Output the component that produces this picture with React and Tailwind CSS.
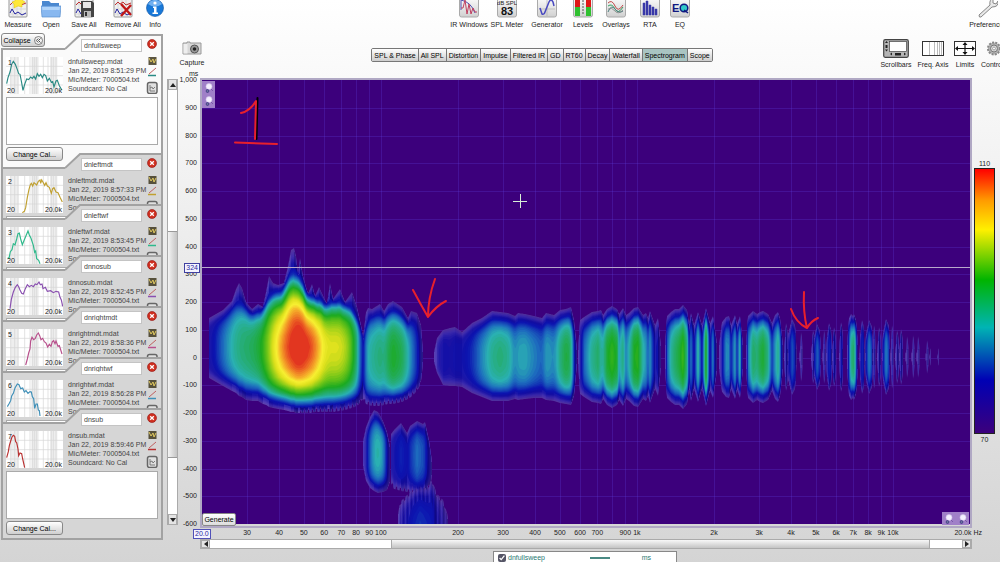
import React from "react";

const measurements = [
  {
    name: "dnfullsweep",
    date: "Jan 22, 2019 8:51:29 PM",
    color: "#2a8a84",
    trace: "2,80 6,62 12,45 17,22 22,13 28,22 34,38 38,50 42,52 46,72 51,100 56,82 62,66 68,68 74,60 79,64 84,58 89,66 94,50 99,58 104,52 109,62 114,52 119,56 124,72 130,64 136,76 140,74 144,90 150,72 154,70 160,86 168,100",
  },
  {
    name: "dnleftmdt",
    date: "Jan 22, 2019 8:57:33 PM",
    color: "#c0a030",
    trace: "49,110 55,106 59,95 64,64 69,40 73,26 76,22 80,30 84,20 92,27 97,16 102,12 104,22 107,12 112,20 116,28 120,20 124,30 130,34 136,52 140,38 144,35 150,48 156,50 162,64 169,78",
  },
  {
    name: "dnleftwf",
    date: "Jan 22, 2019 8:53:45 PM",
    color: "#2fb98c",
    trace: "5,92 9,94 13,74 18,68 22,50 27,54 32,36 36,20 40,18 44,36 49,53 55,38 60,26 66,12 70,24 75,34 82,55 86,76 89,72 92,95 98,100 102,110",
  },
  {
    name: "dnnosub",
    date: "Jan 22, 2019 8:52:45 PM",
    color: "#8a50b0",
    trace: "12,92 16,64 22,42 28,28 34,20 38,26 42,36 47,46 52,48 58,32 64,20 70,26 76,22 82,26 88,18 93,20 99,12 103,20 108,18 111,32 118,28 124,40 134,38 142,44 150,40 158,42 162,58 166,66 170,85",
  },
  {
    name: "dnrightmdt",
    date: "Jan 22, 2019 8:58:36 PM",
    color: "#b8508c",
    trace: "59,108 64,90 68,72 72,60 74,36 78,25 83,32 88,28 92,18 97,12 101,20 105,32 110,28 115,38 120,42 125,54 130,46 135,52 139,38 143,35 147,44 150,36 156,52 160,50 168,75",
  },
  {
    name: "dnrightwf",
    date: "Jan 22, 2019 8:56:28 PM",
    color: "#4090b8",
    trace: "4,80 10,70 14,62 17,48 22,40 27,24 34,12 39,14 44,26 50,24 55,36 60,32 66,40 72,35 76,36 79,50 83,56 86,85 90,72 94,72 97,90 100,92 102,108",
  },
  {
    name: "dnsub",
    date: "Jan 22, 2019 8:59:46 PM",
    color: "#b83030",
    trace: "2,80 7,62 10,44 14,30 18,18 22,13 26,16 29,32 32,35 36,54 38,74 42,66 47,68 50,84 56,110",
  },
];

const tabs = [
  "SPL & Phase",
  "All SPL",
  "Distortion",
  "Impulse",
  "Filtered IR",
  "GD",
  "RT60",
  "Decay",
  "Waterfall",
  "Spectrogram",
  "Scope",
];

const timeTicks = [
  "1,000", "900", "800", "700", "600", "500", "400", "300", "200",
  "100", "0", "-100", "-200", "-300", "-400", "-500", "-600",
];

const freqTicks = [
  [30, "30"], [40, "40"], [50, "50"], [60, "60"], [70, "70"], [80, "80"],
  [90, "90"], [100, "100"], [200, "200"], [300, "300"], [400, "400"],
  [500, "500"], [600, "600"], [700, "700"], [900, "900"], [1000, "1k"],
  [2000, "2k"], [3000, "3k"], [4000, "4k"], [5000, "5k"], [6000, "6k"],
  [7000, "7k"], [8000, "8k"], [9000, "9k"], [10000, "10k"],
];

const gridFreqs = [...freqTicks.map((t) => t[0]), 800];

const freqRatio = (f) => Math.log10(f / 20) / 3;

/* ---------- spectrogram ---------- */

const MID = 357;

// Each island is a list of [x, top, bottom, peak level]
const mirror = (rows) => rows.map(([x, top, peak]) => [x, top, 2 * MID - top, peak]);

const spike = (x, top, peak, w = 4) =>
  mirror([
    [x - w / 2, MID - 4, 0.02],
    [x - w / 2 + 1, top + 14, peak * 0.6],
    [x, top, peak],
    [x + w / 3, top + 6, peak * 0.8],
    [x + w / 2, MID - 8, 0.02],
  ]);

const islands = [
  {
    mid: 347,
    smooth: 10,
    peakSmooth: 5,
    ribFrom: 300,
    rows: [
      [209, 318, 378, 0.15], [216, 314, 382, 0.24], [223, 310, 386, 0.33], [232, 301, 391, 0.42],
      [236, 289, 393, 0.45], [239, 283, 396, 0.47], [242, 288, 397, 0.48], [246, 302, 400, 0.49],
      [252, 309, 401, 0.51], [258, 304, 401, 0.54], [263, 307, 404, 0.6], [266, 292, 405, 0.65],
      [269, 276, 407, 0.71], [273, 283, 408, 0.78], [278, 285, 409, 0.86], [284, 283, 410, 0.94],
      [288, 266, 411, 0.98], [291, 250, 412, 1.01], [294, 248, 412, 1.03], [296, 256, 413, 1.05],
      [298, 274, 413, 1.06], [300, 258, 413, 1.06], [303, 276, 413, 1.04], [308, 294, 413, 1],
      [312, 284, 413, 0.97], [315, 296, 412, 0.94], [319, 287, 412, 0.88], [325, 300, 412, 0.8],
      [327, 304, 412, 0.77], [330, 283, 412, 0.77], [333, 299, 412, 0.78], [340, 289, 411, 0.77],
      [345, 302, 410, 0.74], [352, 292, 408, 0.64], [357, 307, 406, 0.5], [361, 325, 402, 0.3],
      [363, 338, 399, 0.12],
    ],
  },
  {
    mid: MID,
    smooth: 5,
    peakSmooth: 2,
    ribFrom: 364,
    rows: [
      [363, 338, 399, 0.2], [366, 312, 404, 0.36], [368, 308, 405, 0.41], [372, 309, 406, 0.44],
      [380, 304, 406, 0.48], [384, 311, 405, 0.46], [388, 304, 404, 0.52], [393, 301, 404, 0.57],
      [402, 307, 402, 0.52], [408, 318, 399, 0.42], [411, 311, 397, 0.36], [417, 313, 391, 0.25],
      [421, 325, 384, 0.12], [423, 352, 362, 0.03],
    ],
  },
  {
    mid: MID,
    smooth: 3,
    peakSmooth: 2,
    rows: [
      [434, 352, 362, 0.02], [437, 338, 373, 0.12], [443, 330, 385, 0.17], [450, 328, 386, 0.15],
      [455, 327, 386, 0.18], [462, 332, 387, 0.18], [472, 323, 393, 0.25], [482, 318, 397, 0.36],
      [492, 311, 401, 0.45], [500, 312, 401, 0.48], [508, 313, 401, 0.45], [515, 316, 399, 0.36],
      [518, 313, 400, 0.39], [525, 314, 399, 0.4], [534, 316, 398, 0.35], [542, 318, 398, 0.31],
      [546, 313, 400, 0.39], [554, 315, 401, 0.36], [560, 310, 403, 0.47], [566, 309, 404, 0.55],
      [571, 307, 405, 0.5], [574, 320, 396, 0.26], [577, 350, 364, 0.03],
    ],
  },
  {
    mid: MID,
    rows: mirror([
      [578, 350, 0.03], [580, 320, 0.15], [584, 317, 0.32], [592, 312, 0.45], [598, 311, 0.5],
      [601, 310, 0.44], [603, 315, 0.44], [607, 309, 0.56], [612, 306, 0.61], [617, 309, 0.56],
      [619, 314, 0.4], [623, 308, 0.47], [626, 315, 0.36], [629, 313, 0.42], [634, 308, 0.58],
      [638, 307, 0.6], [643, 315, 0.43], [646, 313, 0.38], [648, 318, 0.32], [650, 311, 0.38],
      [655, 325, 0.18], [658, 318, 0.2], [661, 346, 0.03],
    ]),
  },
  {
    mid: MID,
    rows: mirror([
      [665, 345, 0.03], [667, 316, 0.3], [671, 312, 0.44], [675, 309, 0.5], [679, 309, 0.55],
      [683, 305, 0.62], [687, 310, 0.48], [689, 324, 0.25], [691, 313, 0.34], [694, 325, 0.2],
      [698, 312, 0.45], [702, 325, 0.22], [706, 308, 0.6], [710, 323, 0.2], [713, 316, 0.36],
      [717, 343, 0.03],
    ]),
  },
  {
    mid: MID,
    rows: mirror([
      [719, 345, 0.03], [722, 322, 0.2], [726, 317, 0.37], [729, 316, 0.36], [731, 325, 0.24],
      [735, 315, 0.4], [737, 324, 0.26], [740, 316, 0.44], [743, 345, 0.03],
    ]),
  },
  {
    mid: MID,
    rows: mirror([
      [746, 345, 0.03], [748, 316, 0.34], [753, 311, 0.5], [757, 314, 0.48], [760, 312, 0.53],
      [763, 311, 0.56], [768, 314, 0.47], [772, 323, 0.28], [775, 315, 0.38], [778, 312, 0.46],
      [780, 318, 0.38], [783, 345, 0.03],
    ]),
  },
  { mid: MID, rows: spike(786, 323, 0.16) },
  { mid: MID, rows: spike(792, 319, 0.3, 9) },
  { mid: MID, rows: spike(801, 332, 0.08, 3) },
  { mid: MID, rows: spike(813, 330, 0.14) },
  { mid: MID, rows: spike(817, 324, 0.32, 8) },
  { mid: MID, rows: spike(824, 330, 0.12, 3) },
  { mid: MID, rows: spike(829, 323, 0.25, 6) },
  { mid: MID, rows: spike(834, 327, 0.2) },
  { mid: MID, rows: spike(841, 322, 0.22) },
  {
    mid: MID,
    rows: mirror([
      [847, 345, 0.03], [849, 318, 0.3], [851, 314, 0.46], [853, 316, 0.5], [854, 314, 0.5],
      [856, 320, 0.36], [858, 345, 0.03],
    ]),
  },
  { mid: MID, rows: spike(862, 320, 0.26, 5) },
  { mid: MID, rows: spike(869, 320, 0.36, 8) },
  { mid: MID, rows: spike(874, 325, 0.15, 3) },
  { mid: MID, rows: spike(879, 327, 0.16, 4) },
  { mid: MID, rows: spike(886, 319, 0.36, 8) },
  { mid: MID, rows: spike(892, 325, 0.13, 3) },
  { mid: MID, rows: spike(897, 330, 0.13, 4) },
  { mid: MID, rows: spike(901, 329, 0.15, 4) },
  { mid: MID, rows: spike(907, 336, 0.08, 3) },
  { mid: MID, rows: spike(913, 335, 0.08, 3) },
  { mid: MID, rows: spike(918, 336, 0.08, 3) },
  { mid: MID, rows: spike(927, 340, 0.07, 3) },
  { mid: MID, rows: spike(930, 344, 0.06, 2) },
  { mid: MID, rows: spike(938, 344, 0.06, 2) },
  {
    mid: 540,
    ribTop: true,
    rows: [
      [398, 514, 570, 0.05], [400, 502, 570, 0.12], [407, 495, 570, 0.18], [413, 488, 570, 0.23],
      [420, 484, 570, 0.26], [427, 486, 570, 0.24], [432, 480, 570, 0.22], [437, 494, 570, 0.14],
      [443, 500, 570, 0.1], [448, 516, 570, 0.04],
    ],
  },
  {
    mid: 455,
    smooth: 2,
    ribFrom: 391,
    rows: [
      [391, 434, 484, 0.14], [394, 430, 489, 0.18], [401, 423, 491, 0.24], [407, 433, 492, 0.2],
      [410, 426, 493, 0.25], [417, 421, 494, 0.33], [423, 424, 493, 0.29], [425, 422, 491, 0.26],
      [429, 440, 488, 0.14], [432, 462, 478, 0.03],
    ],
  },
  {
    mid: 453,
    smooth: 2,
    peakSmooth: 2,
    rows: [
      [363, 441, 466, 0.08], [366, 427, 481, 0.18], [370, 417, 488, 0.32], [374, 410, 491, 0.4],
      [378, 412, 493, 0.43], [383, 421, 492, 0.38], [387, 432, 490, 0.22], [390, 447, 482, 0.05],
    ],
  },
];

const fade = [
  [0, 1], [0.15, 0.94], [0.38, 0.83], [0.57, 0.74], [0.75, 0.61], [0.85, 0.5], [0.93, 0.35], [0.98, 0.18], [1, 0],
];

const palette = [
  [0, [80, 48, 156]],
  [0.07, [58, 40, 172]],
  [0.14, [20, 14, 164]],
  [0.21, [12, 20, 176]],
  [0.32, [30, 110, 190]],
  [0.4, [42, 176, 178]],
  [0.49, [36, 172, 100]],
  [0.57, [28, 170, 32]],
  [0.66, [110, 196, 24]],
  [0.76, [220, 224, 28]],
  [0.82, [248, 240, 50]],
  [0.89, [244, 160, 40]],
  [0.96, [232, 80, 34]],
  [1, [222, 36, 30]],
];

function lerpTable(table, v) {
  for (let i = 1; i < table.length; i++) {
    if (v <= table[i][0]) {
      const [a, va] = table[i - 1];
      const [b, vb] = table[i];
      const k = (v - a) / (b - a);
      return Array.isArray(va) ? va.map((c, j) => Math.round(c + (vb[j] - c) * k)) : va + (vb - va) * k;
    }
  }
  return table[table.length - 1][1];
}

const STEP = 0.5;

function average(values, radius) {
  const r = Math.round(radius / STEP);
  return values.map((_, i) => {
    let sum = 0;
    for (let j = i - r; j <= i + r; j++) {
      sum += values[Math.min(values.length - 1, Math.max(0, j))];
    }
    return sum / (2 * r + 1);
  });
}

// Resample the control rows into thin columns and add a smoothed envelope
function toColumns({ rows, mid, smooth = 0, peakSmooth = 0, ribFrom = Infinity, ribTop }) {
  const first = rows[0][0];
  const last = rows[rows.length - 1][0];
  const xs = [];
  for (let x = first; x <= last; x += STEP) xs.push(x);

  const sample = (col) => {
    const table = rows.map((r) => [r[0], r[col]]);
    return xs.map((x) => lerpTable(table, x));
  };
  const top = sample(1);
  const bottom = sample(2);
  const peak = average(sample(3), peakSmooth);
  const wide = average(top, smooth);
  const soft = average(top.map((t, i) => Math.max(t, wide[i])), smooth / 3);

  return xs.map((x, i) => {
    const rib = x % 4 < 1.5 ? 3 : 0;
    return {
      x,
      mid,
      top: top[i] + (ribTop ? rib : 0),
      soft: soft[i],
      bottom: bottom[i],
      rib: x > ribFrom ? rib : 0,
      peak: peak[i],
    };
  });
}

function span(c, level) {
  const k = Math.pow(lerpTable(fade, Math.min(1, level / c.peak)), 0.6 + 0.5 * c.peak);
  const w = Math.min(1, level / 0.25);
  const edge = c.top + (c.soft - c.top) * w;
  const base = c.bottom - c.rib * (1 - w);
  return [c.mid - (c.mid - edge) * k, c.mid + (base - c.mid) * k];
}

function contour(cols, level) {
  let d = "";
  let run = [];
  const flush = () => {
    if (run.length > 1) {
      const up = run.map((p) => `${p[0]},${p[1].toFixed(1)}`);
      const down = run.map((p) => `${p[0]},${p[2].toFixed(1)}`).reverse();
      d += `M${up.join("L")}L${down.join("L")}Z`;
    }
    run = [];
  };
  cols.forEach((c) => {
    if (c.peak > level) run.push([c.x, ...span(c, level)]);
    else flush();
  });
  flush();
  return d;
}

const columns = islands.map(toColumns);
const LEVELS = 60;
const SHADED = 11;
const layers = Array.from({ length: LEVELS }, (_, i) => {
  const level = i / LEVELS;
  const [r, g, b] = lerpTable(palette, level);
  return { d: columns.map((c) => contour(c, level)).join(""), fill: `rgb(${r},${g},${b})` };
});

// Light falls from the left: rising flanks are brighter, falling ones darker
const shades = columns
  .flatMap((cols) =>
    cols.slice(0, -2).filter((_, i) => i % 2 === 0).map((c, i) => {
      const next = cols[i * 2 + 2];
      const slope = c.top - next.top + (next.peak - c.peak) * 40;
      const alpha = slope > 0 ? Math.min(0.24, slope * 0.05) : Math.min(0.4, -slope * 0.07);
      return {
        x: c.x,
        y: Math.max(c.top, next.top),
        h: Math.min(c.bottom - c.rib, next.bottom - next.rib) - Math.max(c.top, next.top),
        fill: slope > 0 ? `rgba(150,130,220,${alpha.toFixed(2)})` : `rgba(10,0,90,${alpha.toFixed(2)})`,
      };
    })
  )
  .filter((s) => s.h > 0);

function Spectrogram() {
  return (
    <svg className="block w-full h-[444px] bg-[#3c007c]" viewBox="202 80 768 444" preserveAspectRatio="none">
      <g stroke="#6040e0" strokeOpacity="0.26">
        {gridFreqs.map((f) => (
          <path key={f} d={`M${202.5 + Math.round(freqRatio(f) * 768)} 80v444`} />
        ))}
        {timeTicks.slice(1, -1).map((t, i) => (
          <path key={t} d={`M202 ${Math.round(80 + (i + 1) * 27.75) + 0.5}h768`} />
        ))}
      </g>

      {layers.slice(0, SHADED).map((l, i) => (
        <path key={i} d={l.d} fill={l.fill} />
      ))}
      {shades.map((s, i) => (
        <rect key={i} x={s.x} y={s.y} width="1" height={s.h} fill={s.fill} />
      ))}
      {layers.slice(SHADED).map((l, i) => (
        <path key={i} d={l.d} fill={l.fill} />
      ))}

      <path d="M202 267.5h768" stroke="#b8a8cc" />
      <path d="M513 201.5h14M520.5 194v14" stroke="#d8f0d8" />

      <g fill="none" strokeLinecap="round" strokeLinejoin="round">
        <path d="M257.500 98L256.500 139" stroke="#000" strokeWidth="2" />
        <g stroke="#e8202c" strokeWidth="2">
          <path d="M241 113Q250 111 256 101L255 139M235 142.500L277 144" />
          <path d="M413 290Q421 305 428 317Q428 298 435 279M428 317Q436 306 446 301" />
          <path d="M804 292Q803 312 807 328M791 309Q796 323 807 328Q811 321 818 318" />
        </g>
      </g>
    </svg>
  );
}

/* ---------- icons ---------- */

function SheetIcon({ children }) {
  return (
    <svg className="w-5 h-[18px]" viewBox="0 0 20 18">
      <rect x="1" y="-4" width="18" height="21" rx="1" fill="#f0f0f0" stroke="#999" />
      <path d="M5-2v19M9-2v19M13-2v19M1 4h18M1 9h18M1 14h18" stroke="#ccc" strokeWidth=".6" />
      <path d="M2 5l3-3 2 2 3-2 3 3 5-2" fill="none" stroke="#c03030" />
      <path d="M2 13l2-4 3 5 3-2 4 3 4-2" fill="none" stroke="#2020a0" />
      {children}
    </svg>
  );
}

function TileIcon({ children }) {
  return (
    <svg className="w-5 h-[18px]" viewBox="0 0 20 18">
      <defs>
        <linearGradient id="tile" x2="0" y2="1">
          <stop offset="0" stopColor="#fff" />
          <stop offset="1" stopColor="#d0d0d0" />
        </linearGradient>
      </defs>
      <rect x="0.500" y="-4" width="19" height="21" rx="2" fill="url(#tile)" stroke="#aaa" />
      {children}
    </svg>
  );
}

const leftTools = [
  {
    label: "Measure",
    width: "w-9",
    icon: (
      <SheetIcon>
        <path d="M7-2l3 1 3-2 1 3 3 2-3 2 0 3-4-1-4 2V4L4 2l3-1z" fill="#ffe838" stroke="#e0c000" strokeWidth=".5" />
      </SheetIcon>
    ),
  },
  {
    label: "Open",
    width: "w-[30px]",
    icon: (
      <svg className="w-5 h-[18px]" viewBox="0 0 20 18">
        <path d="M1 1h7l2 2h8v12H1z" fill="#4a88d0" />
        <path d="M0 6h20l-1 11H1z" fill="#88b8f0" stroke="#5a90d0" strokeWidth=".7" />
        <path d="M1 7h18l-.5 3H1.500z" fill="#b0d4fa" />
      </svg>
    ),
  },
  {
    label: "Save All",
    width: "w-9",
    icon: (
      <SheetIcon>
        <path d="M7 1h11l2 2v14H7z" fill="#444" />
        <path d="M9 2h8v6H9z" fill="#e8e8e8" />
        <path d="M10 11h7v6h-7z" fill="#bbb" />
        <path d="M11 12h2v4h-2z" fill="#333" />
      </SheetIcon>
    ),
  },
  {
    label: "Remove All",
    width: "w-[42px]",
    icon: (
      <SheetIcon>
        <path d="M8 4l10 11M18 5L8 16" stroke="#c01818" strokeWidth="2.400" />
      </SheetIcon>
    ),
  },
  {
    label: "Info",
    width: "w-[22px]",
    icon: (
      <svg className="w-5 h-[18px]" viewBox="0 0 20 18">
        <circle cx="10" cy="8" r="8.500" fill="#1878d8" stroke="#0c50a0" strokeWidth=".6" />
        <path d="M3 4a8 8 0 0 1 14 0q-7 5-14 0" fill="#70b0f0" />
        <circle cx="10" cy="3" r="1.600" fill="#fff" />
        <path d="M8 6.500h3.500v6H13V14H7.500v-1.500H9V8H8z" fill="#fff" />
      </svg>
    ),
  },
];

const centerTools = [
  {
    label: "IR Windows",
    width: "w-[34px]",
    icon: (
      <TileIcon>
        <path d="M2 10V0q10 2 14 13" fill="none" stroke="#5050b0" />
        <path d="M2 8h2l2-8 2 14 2-10 2 10 2-6 2 4h2" fill="none" stroke="#c04060" />
      </TileIcon>
    ),
  },
  {
    label: "SPL Meter",
    width: "w-[42px]",
    icon: (
      <TileIcon>
        <text x="10" y="5" fontSize="6" textAnchor="middle" fill="#222">dB SPL</text>
        <text x="10" y="15" fontSize="11" fontWeight="bold" textAnchor="middle" fill="#111">83</text>
      </TileIcon>
    ),
  },
  {
    label: "Generator",
    width: "w-[38px]",
    icon: (
      <TileIcon>
        <path d="M2 9h16M10 0v16" stroke="#aaa" strokeWidth=".6" />
        <path d="M3 8l2 6q2 1 3-2l4-10q2-4 4 0l1 4" fill="none" stroke="#4848c0" strokeWidth="1.500" />
      </TileIcon>
    ),
  },
  {
    label: "Levels",
    width: "w-[34px]",
    icon: (
      <TileIcon>
        <path d="M2 0h5v7H2zM13 0h5v7h-5z" fill="#e01818" />
        <path d="M2 7h5v9H2zM13 7h5v9h-5z" fill="#30c030" />
        <path d="M9 1h2M9 4h2M9 7h2M9 10h2M9 13h2" stroke="#555" />
      </TileIcon>
    ),
  },
  {
    label: "Overlays",
    width: "w-8",
    icon: (
      <TileIcon>
        <path d="M2 3q4-4 7 3t8-1" fill="none" stroke="#c04848" />
        <path d="M2 6q4-3 7 3t8-2" fill="none" stroke="#30a060" />
        <path d="M2 12q3-8 7-3t8 2" fill="none" stroke="#508080" />
        <path d="M2 9q4-2 7 2t8-1" fill="none" stroke="#777" strokeWidth=".7" />
      </TileIcon>
    ),
  },
  {
    label: "RTA",
    width: "w-9",
    icon: (
      <TileIcon>
        <path d="M3 15V3h2v12zM6 15V1h2v14zM9 15V5h2v10zM12 15V7h2v8zM15 15V9h2v6z" fill="#3838a8" stroke="#3838a8" strokeWidth=".5" />
      </TileIcon>
    ),
  },
  {
    label: "EQ",
    width: "w-6",
    icon: (
      <TileIcon>
        <text x="2" y="12" fontSize="11" fontWeight="bold" fill="#101880">E</text>
        <circle cx="14" cy="8" r="3.800" fill="#30c8c8" stroke="#101880" strokeWidth="1.500" />
        <path d="M14 10l4 3" stroke="#101880" strokeWidth="1.500" />
      </TileIcon>
    ),
  },
];

function ToolButton({ label, width, icon }) {
  return (
    <button className={`${width} shrink-0 flex flex-col items-center gap-[2px] whitespace-nowrap`}>
      {icon}
      <span>{label}</span>
    </button>
  );
}

function CloseIcon() {
  return (
    <svg className="w-[10px] h-[10px]" viewBox="0 0 10 10">
      <circle cx="5" cy="5" r="4.500" fill="#d03020" stroke="#901010" strokeWidth=".6" />
      <path d="M3.200 3.200l3.600 3.600M6.800 3.200L3.200 6.800" stroke="#fff" strokeWidth="1.300" />
    </svg>
  );
}

function SearchPair({ vertical }) {
  return (
    <div className={`flex items-center justify-around bg-[#a080c8] ${vertical ? "flex-col w-[13px] h-[27px]" : "w-[27px] h-[13px]"}`}>
      {["+", "-"].map((s) => (
        <button key={s} aria-label={s === "+" ? "Zoom in" : "Zoom out"}>
          <svg className="w-[9px] h-[10px]" viewBox="0 0 9 10">
            <circle cx="5" cy="3.500" r="3" fill="#f4f0ff" stroke="#d0c0e8" strokeWidth=".6" />
            <path d="M7 6l2 2" stroke="#7858a8" />
            <circle cx="3.500" cy="8" r="1.800" fill="#303078" />
            <path d="M2.500 8h2" stroke="#fff" strokeWidth=".6" />
          </svg>
        </button>
      ))}
    </div>
  );
}

/* ---------- sidebar ---------- */

function Thumbnail({ index, color, trace }) {
  return (
    <svg className="w-[57px] h-[37px] shrink-0 bg-white" viewBox="0 0 171 111">
      <path d="M14 0h24v111H14zM76 0h22v111H76zM132 0h22v111h-22z" fill="#eee" />
      <path
        d="M14 0v111M26 0v111M36 0v111M56 0v111M72 0v111M80 0v111M86 0v111M92 0v111M112 0v111M126 0v111M136 0v111M142 0v111M150 0v111M0 28h171M0 56h171M0 84h171"
        stroke="#d4d4d4"
        strokeWidth="2"
      />
      <polyline points={trace} fill="none" stroke={color} strokeWidth="3.500" />
      <g fontSize="21" fill="#222">
        <text x="6" y="23">{index}</text>
        <text x="3" y="108">20</text>
        <text x="168" y="108" textAnchor="end">20.0k</text>
      </g>
    </svg>
  );
}

function MeasurementCard({ item, index }) {
  const active = index === 1;
  const bg = active ? "bg-[#fafafa]" : "bg-[#d6d6d6]";
  const size = active ? "h-[135px] -mb-4" : index === 7 ? "h-[132px]" : "h-[132px] -mb-[81px]";

  return (
    <li className={`relative flex flex-col ${size}`}>
      <div className="relative z-10 flex h-4">
        <div className="w-16 h-4 border-b-2 border-[#a2a2a2]" />
        <svg className="w-4 h-4" viewBox="0 0 16 16">
          <path d="M0 15L15 1h1v15H0z" fill={active ? "#fafafa" : "#d6d6d6"} />
          <path d="M0 15L15 1h1" fill="none" stroke="#a2a2a2" strokeWidth="2" />
        </svg>
        <div className={`flex-1 flex items-start gap-[5px] pt-[3px] border-t-2 border-r-2 border-[#a2a2a2] ${bg}`}>
          <input
            aria-label={`Name of measurement ${index}`}
            defaultValue={item.name}
            className="w-[61px] h-[13px] px-[2px] bg-white border border-[#c4c4c4] text-[#444]"
          />
          <button aria-label="Remove measurement">
            <CloseIcon />
          </button>
        </div>
      </div>

      <div className={`flex-1 flex flex-col items-start px-[3px] pt-[7px] border-x-2 border-b-2 border-[#a2a2a2] ${bg}`}>
        <div className="w-full h-10 flex">
          <Thumbnail index={index} color={item.color} trace={item.trace} />
          <div className="flex-1 min-w-0 pl-[5px] leading-[9px] text-[#444] whitespace-nowrap">
            <p>{item.name}.mdat</p>
            <p>{item.date}</p>
            <p>Mic/Meter: 7000504.txt</p>
            <p>Soundcard: No Cal</p>
          </div>
          <svg className="w-3 h-[37px] shrink-0" viewBox="0 0 12 37">
            <path d="M2.500 0v8h8V0z" fill="#403820" opacity=".85" />
            <path d="M3 1l2 4 2-3 1 4 2-4" fill="none" stroke="#e0c860" />
            <path d="M3 17l7-6" stroke="#c06060" />
            <path d="M2 18.500h8" stroke={item.color} strokeWidth="1.500" />
            <rect x="1.500" y="25.500" width="9.500" height="11" rx="2" fill="#e0e0e0" stroke="#666" strokeWidth="1.500" />
            <path d="M4 28v6h5M4 31l2-1 1 2 2-2" fill="none" stroke="#666" strokeWidth=".8" />
          </svg>
        </div>
        <textarea
          aria-label={`Notes for ${item.name}`}
          className="block shrink-0 w-full h-12 bg-white border border-[#aaa] resize-none"
        />
        <button className="shrink-0 w-[57px] h-[14px] mt-[2px] leading-[11px] border border-[#888] rounded-[3px] bg-linear-to-b from-white to-[#cfcfcf] text-black">
          Change Cal...
        </button>
      </div>
    </li>
  );
}

function ScrollArrow({ d, label, size }) {
  return (
    <button aria-label={label} className={`${size} shrink-0 flex items-center justify-center bg-[#e4e4e4] border border-[#aaa]`}>
      <svg className="w-[6px] h-[6px]" viewBox="0 0 6 6">
        <path d={d} fill="#222" />
      </svg>
    </button>
  );
}

function Sidebar() {
  return (
    <aside className="w-[180px] shrink-0 flex gap-[4px] pl-[1px]">
      <div className="w-[162px] shrink-0 pt-[1px]">
        <button className="relative z-20 w-[44px] h-[14px] flex items-center justify-center gap-[3px] border border-[#888] rounded-[3px] bg-linear-to-b from-white to-[#cfcfcf] text-black">
          Collapse
          <svg className="w-[9px] h-[9px]" viewBox="0 0 9 9">
            <circle cx="4.500" cy="4.500" r="4" fill="#f4f4f4" stroke="#555" strokeWidth=".7" />
            <path d="M4.300 2.500l-2 2 2 2M6.500 2.500l-2 2 2 2" fill="none" stroke="#222" strokeWidth=".8" />
          </svg>
        </button>
        <ul className="-mt-[13px]">
          {measurements.map((m, i) => (
            <MeasurementCard key={m.name} item={m} index={i + 1} />
          ))}
        </ul>
      </div>
      <div className="w-[11px] h-[446px] mt-[47px] flex flex-col bg-white border-x border-[#aaa]">
        <ScrollArrow d="M0 5h6L3 1z" label="Scroll up" size="w-full h-[11px]" />
        <div className="h-[141px]" />
        <div className="h-[227px] border-y border-[#999] bg-linear-to-r from-[#f4f4f4] to-[#c4c4c4]" />
        <div className="flex-1" />
        <ScrollArrow d="M0 1h6L3 5z" label="Scroll down" size="w-full h-[11px]" />
      </div>
    </aside>
  );
}

/* ---------- graph area ---------- */

const graphTools = [
  {
    label: "Scrollbars",
    width: "w-8",
    icon: (
      <svg className="w-[26px] h-[19px]" viewBox="0 0 26 19">
        <rect x=".7" y=".7" width="24.600" height="17.600" rx="1.500" fill="#b4b4b4" stroke="#444" strokeWidth="1.200" />
        <rect x="6.500" y="2.500" width="17" height="10" fill="#fff" stroke="#444" strokeWidth=".7" />
        <path d="M3.500 2l1.500 2H2zM3.500 12.500L2 10.500h3zM2.500 6h2v3h-2zM7 15l2-1.500v3zM23 15l-2-1.500v3zM12 14h6v2.500h-6z" fill="#222" />
      </svg>
    ),
  },
  {
    label: "Freq. Axis",
    width: "w-[34px]",
    icon: (
      <svg className="w-[22px] h-[19px]" viewBox="0 0 22 19">
        <rect x=".5" y="2.500" width="21" height="14" fill="#fff" stroke="#333" />
        <path d="M7.500 3v13M12.500 3v13M15.500 3v13M17.500 3v13M19.500 3v13" stroke="#aaa" strokeWidth=".8" />
      </svg>
    ),
  },
  {
    label: "Limits",
    width: "w-[22px]",
    icon: (
      <svg className="w-[22px] h-[19px]" viewBox="0 0 22 19">
        <rect x=".5" y="2.500" width="21" height="14" fill="#fff" stroke="#333" />
        <path d="M2 9.500h18M11 4v11" stroke="#111" strokeWidth="1.200" />
        <path d="M1 9.500L4 7v5zM21 9.500L18 7v5zM11 3L8.500 6h5zM11 16l-2.500-3h5z" fill="#111" />
      </svg>
    ),
  },
  {
    label: "Controls",
    width: "w-7",
    icon: (
      <svg className="w-[16px] h-[19px]" viewBox="0 0 16 19">
        <circle cx="8" cy="9.500" r="6" fill="#b4b4b4" stroke="#888" strokeWidth="2" strokeDasharray="2 1.200" />
        <circle cx="8" cy="9.500" r="3.500" fill="#d8d8d8" stroke="#777" />
        <circle cx="8" cy="9.500" r="1.400" fill="#fff" stroke="#777" strokeWidth=".6" />
      </svg>
    ),
  },
];

function GraphToolbar() {
  return (
    <div className="h-[38px] flex items-start">
      <button className="w-[24px] flex flex-col items-center gap-[2px] pt-[9px]">
        <svg className="w-[20px] h-[15px]" viewBox="0 0 20 15">
          <path d="M2 2h3V1h3v1h11v11H1V2z" fill="#d8d8d8" stroke="#999" />
          <rect x="1.500" y="3" width="4" height="9.500" fill="#eee" />
          <circle cx="12.500" cy="8" r="4" fill="#999" stroke="#555" />
          <circle cx="12.500" cy="8" r="1.800" fill="#222" />
        </svg>
        Capture
      </button>
      <div className="flex-1 flex justify-center pt-4">
        <div className="flex h-[14px] border border-[#777] rounded-[2px] overflow-hidden">
          {tabs.map((t) => (
            <button
              key={t}
              className={`px-[2px] border-r border-[#777] last:border-r-0 whitespace-nowrap text-black ${
                t === "Spectrogram" ? "bg-[#a9c4c2]" : "bg-linear-to-b from-white to-[#cdcdcd]"
              }`}
            >
              {t}
            </button>
          ))}
        </div>
      </div>
      <div className="shrink-0 flex gap-[4px] pt-[7px] -mr-2">
        {graphTools.map((t) => (
          <ToolButton key={t.label} {...t} />
        ))}
      </div>
    </div>
  );
}

function Graph() {
  return (
    <>
      <div className="h-2 pl-[9px] leading-[8px]">ms</div>
      <div className="flex">
        <div className="relative w-[20px] shrink-0 flex justify-end pr-[3px]">
          <div className="h-[452px] -mt-[2px] flex flex-col justify-between text-right leading-[8px]">
            {timeTicks.map((t) => (
              <span key={t}>{t}</span>
            ))}
          </div>
          <span className="absolute right-0 top-[185px] px-[1px] leading-[8px] border border-[#4040a0] bg-[#f4f4ff] text-[#2828a0]">
            324
          </span>
        </div>

        <div className="relative flex-1 border-2 border-[#b0a8c4]">
          <Spectrogram />
          <div className="absolute left-0 top-px">
            <SearchPair vertical />
          </div>
          <button className="absolute left-0 bottom-0 w-[34px] h-[13px] border border-[#888] rounded-[2px] bg-linear-to-b from-white to-[#dcdcdc] text-black">
            Generate
          </button>
          <div className="absolute right-px bottom-px">
            <SearchPair />
          </div>
        </div>

        <div className="w-7 shrink-0 flex flex-col items-center pt-[82px] pr-[3px] leading-[8px]">
          110
          <div className="w-[21px] h-[266px] border border-[#222] bg-[linear-gradient(to_bottom,#ff0000,#ff9c00_12%,#fff000_23%,#00b400_42%,#00b4b4_60%,#0000b4_80%,#3c007c)]" />
          <span className="mt-[2px]">70</span>
        </div>
      </div>

      <div className="relative h-[11px] ml-[22px] mr-[30px] leading-[10px]">
        <span className="absolute -left-[9px] top-[1px] px-[1px] leading-[8px] border border-[#5050b8] bg-[#f4f4ff] text-[#2828a0]">
          20.0
        </span>
        {freqTicks.map(([f, label]) => (
          <span key={f} className="absolute -translate-x-1/2" style={{ left: `${freqRatio(f) * 100}%` }}>
            {label}
          </span>
        ))}
        <span className="absolute -right-[12px] whitespace-nowrap">20.0k Hz</span>
      </div>

      <div className="h-[10px] ml-[20px] mr-[28px] flex bg-white border border-[#aaa]">
        <ScrollArrow d="M5 0v6L1 3z" label="Scroll left" size="w-[9px] h-full" />
        <div className="w-[181px]" />
        <div className="flex-1 border-x border-[#aaa] bg-linear-to-b from-[#f8f8f8] to-[#c4c4c4]" />
        <div className="w-[32px]" />
        <ScrollArrow d="M1 0v6l4-3z" label="Scroll right" size="w-[9px] h-full" />
      </div>

      <div className="flex justify-center mt-[2px] pr-[10px]">
        <div className="w-[184px] h-[13px] flex items-center pl-[4px] pr-[25px] bg-white border border-[#888] text-[#2a7a74]">
          <label className="flex items-center gap-[2px]">
            <input type="checkbox" defaultChecked className="w-[8px] h-[8px] accent-[#556]" />
            dnfullsweep
          </label>
          <span className="w-[20px] h-[2px] ml-auto mr-8 bg-[#4a8a84]" />
          ms
        </div>
      </div>
    </>
  );
}

export default function App() {
  return (
    <div className="min-h-screen overflow-hidden bg-linear-to-b from-white to-[#d4d4d4] font-['Liberation_Sans',Arial,sans-serif] text-[7px] leading-[9px] text-[#222]">
      <header className="h-8 flex">
        <nav className="w-[180px] shrink-0 flex">
          {leftTools.map((t) => (
            <ToolButton key={t.label} {...t} />
          ))}
        </nav>
        <nav className="flex-1 flex justify-center pr-[4px]">
          {centerTools.map((t) => (
            <ToolButton key={t.label} {...t} />
          ))}
        </nav>
        <div className="-mr-2">
          <ToolButton
            label="Preferences"
            width="w-10"
            icon={
              <svg className="w-5 h-[18px]" viewBox="0 0 20 18">
                <path
                  d="M1 15L12 5Q11 0 15-2v5l3 1 2-3q1 6-6 6L3 17q-2 1-2-2z"
                  fill="#e8e8e8"
                  stroke="#888"
                />
              </svg>
            }
          />
        </div>
      </header>

      <div className="flex">
        <Sidebar />
        <main className="flex-1 min-w-0">
          <GraphToolbar />
          <Graph />
        </main>
      </div>
    </div>
  );
}
